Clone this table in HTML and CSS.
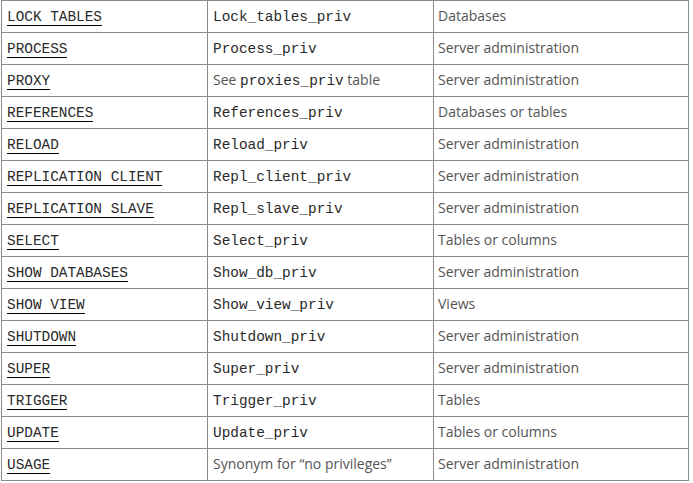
FILE: index.html
```html
<!DOCTYPE html>
<html>
<head>
<meta charset="utf-8">
<link rel="stylesheet" href="styles.css">
</head>
<body>
<table class="priv-table">
  <colgroup>
    <col class="c1">
    <col class="c2">
    <col class="c3">
  </colgroup>
  <tbody>
    <tr><td><a class="lnk" href="#">LOCK TABLES</a></td><td><code>Lock_tables_priv</code></td><td>Databases</td></tr>
    <tr><td><a class="lnk" href="#">PROCESS</a></td><td><code>Process_priv</code></td><td>Server administration</td></tr>
    <tr><td><a class="lnk" href="#">PROXY</a></td><td>See <code>proxies_priv</code> table</td><td>Server administration</td></tr>
    <tr><td><a class="lnk" href="#">REFERENCES</a></td><td><code>References_priv</code></td><td>Databases or tables</td></tr>
    <tr><td><a class="lnk" href="#">RELOAD</a></td><td><code>Reload_priv</code></td><td>Server administration</td></tr>
    <tr><td><a class="lnk" href="#">REPLICATION CLIENT</a></td><td><code>Repl_client_priv</code></td><td>Server administration</td></tr>
    <tr><td><a class="lnk" href="#">REPLICATION SLAVE</a></td><td><code>Repl_slave_priv</code></td><td>Server administration</td></tr>
    <tr><td><a class="lnk" href="#">SELECT</a></td><td><code>Select_priv</code></td><td>Tables or columns</td></tr>
    <tr><td><a class="lnk" href="#">SHOW DATABASES</a></td><td><code>Show_db_priv</code></td><td>Server administration</td></tr>
    <tr><td><a class="lnk" href="#">SHOW VIEW</a></td><td><code>Show_view_priv</code></td><td>Views</td></tr>
    <tr><td><a class="lnk" href="#">SHUTDOWN</a></td><td><code>Shutdown_priv</code></td><td>Server administration</td></tr>
    <tr><td><a class="lnk" href="#">SUPER</a></td><td><code>Super_priv</code></td><td>Server administration</td></tr>
    <tr><td><a class="lnk" href="#">TRIGGER</a></td><td><code>Trigger_priv</code></td><td>Tables</td></tr>
    <tr><td><a class="lnk" href="#">UPDATE</a></td><td><code>Update_priv</code></td><td>Tables or columns</td></tr>
    <tr><td><a class="lnk" href="#">USAGE</a></td><td>Synonym for “no privileges”</td><td>Server administration</td></tr>
  </tbody>
</table>
</body>
</html>
```
FILE: styles.css
```css
html, body {
  margin: 0;
  padding: 0;
  background: #fff;
}
body {
  font-family: "Open Sans", sans-serif;
  font-size: 14px;
  color: #555;
}
.priv-table {
  margin-left: 1px;
  border-collapse: collapse;
  table-layout: fixed;
  width: 687px;
}
.c1 { width: 206px; }
.c2 { width: 226px; }
.c3 { width: 255px; }
.priv-table td {
  border: 1px solid #8a8a8a;
  padding: 4px 4px 5px 5px;
  line-height: 22px;
  white-space: nowrap;
  vertical-align: middle;
}
.priv-table td:nth-child(3) {
  padding-left: 4px;
}
.lnk, code {
  font-family: "Liberation Mono", "Courier New", monospace;
  font-size: 14.4px;
  line-height: 14px;
  color: #2a2a2a;
}
.lnk {
  text-decoration: none;
  border-bottom: 1px solid #000;
}
```
